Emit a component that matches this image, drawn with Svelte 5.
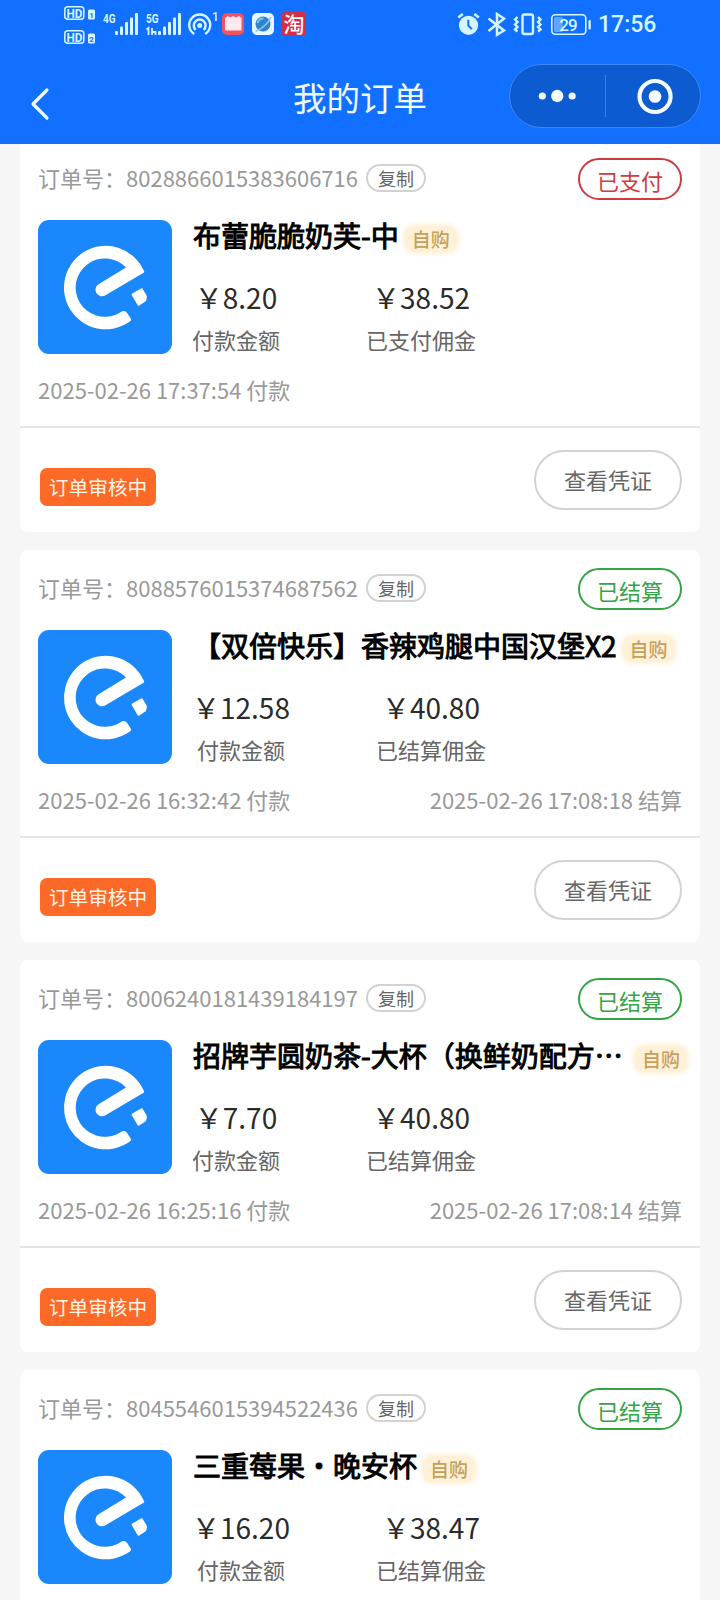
<script lang="ts">
  type Order = {
    id: string;
    name: string;
    truncated?: boolean;
    paid: string;
    commission: string;
    settled: boolean;
    paidAt?: string;
    settledAt?: string;
  };

  const orders: Order[] = [
    {
      id: '8028866015383606716',
      name: '布蕾脆脆奶芙-中',
      paid: '8.20',
      commission: '38.52',
      settled: false,
      paidAt: '2025-02-26 17:37:54'
    },
    {
      id: '8088576015374687562',
      name: '【双倍快乐】香辣鸡腿中国汉堡X2',
      paid: '12.58',
      commission: '40.80',
      settled: true,
      paidAt: '2025-02-26 16:32:42',
      settledAt: '2025-02-26 17:08:18'
    },
    {
      id: '8006240181439184197',
      name: '招牌芋圆奶茶-大杯（换鲜奶配方⋯',
      truncated: true,
      paid: '7.70',
      commission: '40.80',
      settled: true,
      paidAt: '2025-02-26 16:25:16',
      settledAt: '2025-02-26 17:08:14'
    },
    {
      id: '8045546015394522436',
      name: '三重莓果・晚安杯',
      paid: '16.20',
      commission: '38.47',
      settled: true
    }
  ];

  const bars = [0, 1, 2, 3, 4];
</script>

<div class="screen" lang="zh-CN">
  <header>
    <div class="status-bar">
      <svg class="hd" width="34" height="50" viewBox="63 0 34 50">
        {#each [6, 30] as y, i}
          <rect x="64.8" y={y + 0.8} width="19" height="12.4" rx="3" class="line" stroke-width="1.5" />
          <text x="66.4" y={y + 11.6} font-size="12.5" font-weight="700" textLength="16" lengthAdjust="spacingAndGlyphs">HD</text>
          <rect x="88" y={y + 3.5} width="7" height="10" rx="1.5" />
          <text x="89.3" y={y + 11.6} font-size="8" font-weight="700" class="cut">{i + 1}</text>
        {/each}
      </svg>
      <svg width="42" height="50" viewBox="100 0 42 50">
        <text x="103" y="23" font-size="12.5" font-weight="700" textLength="12.5" lengthAdjust="spacingAndGlyphs">4G</text>
        {#each bars as i}
          <rect x={115 + i * 5} y={31 - i * 4.5} width="3" height={4 + i * 4.5} rx="1" />
        {/each}
      </svg>
      <svg width="42" height="50" viewBox="142 0 42 50">
        <text x="146" y="23" font-size="12.5" font-weight="700" textLength="12.5" lengthAdjust="spacingAndGlyphs">5G</text>
        <path d="M146.500 29.500l2-1.500v7M152 28v7M152 32h3.500v3" class="line" stroke-width="1.800" />
        {#each bars as i}
          <rect x={158 + i * 5} y={31 - i * 4.5} width="3" height={4 + i * 4.5} rx="1" />
        {/each}
      </svg>
      <svg width="36" height="50" viewBox="185 0 36 50">
        <path d="M195.200 34a10.500 10.500 0 1 1 11 0M196.700 29.800a5.900 5.900 0 1 1 8 0" class="line" stroke-width="2.400" />
        <circle cx="200.700" cy="25.500" r="2.500" />
        <text x="213" y="20.500" font-size="12" font-weight="500">1</text>
      </svg>
      <svg width="28" height="50" viewBox="221 0 28 50">
        <rect x="223" y="13" width="22" height="22" rx="5" fill="#f4515f" />
        <path d="M226 18l3-2 2 1.500 3-1.500 3 1.500 3-1.500 2.500 2v12.500H226z" fill="#fdeaf0" />
      </svg>
      <svg width="30" height="50" viewBox="249 0 30 50">
        <rect x="253" y="13" width="22" height="22" rx="5" fill="#e6f8ff" />
        <circle cx="264" cy="24" r="7.500" fill="#2f83cf" />
        <path d="M258.500 23a6 6 0 0 1 6-4.500" stroke="#7cc5ee" stroke-width="2" fill="none" />
        <path d="M256.500 31c3.500 0 13-7.500 15.500-14" fill="none" stroke="#8ec9f0" stroke-width="1.500" />
      </svg>
      <span class="taobao">淘</span>

      <svg class="push" width="26" height="50" viewBox="456 0 26 50">
        <circle cx="468.500" cy="25.300" r="9.600" />
        <path d="M458.300 17.500l4.500-3.600M478.800 17.500l-4.500-3.600" class="line" stroke-width="2.600" />
        <path d="M468.300 19.800v5.800l3.600 3.500" stroke="#1170ff" stroke-width="2" fill="none" />
      </svg>
      <svg width="28" height="50" viewBox="482 0 28 50">
        <path d="M488.500 18.500l15.500 12-7 4.300V14l7 4.500-15.500 12.500" class="line" stroke-width="2.500" />
      </svg>
      <svg width="36" height="50" viewBox="510 0 36 50">
        <rect x="522.500" y="14.500" width="10.500" height="19.500" rx="2" class="line" stroke-width="2.400" />
        <path d="M517.500 17l-2.500 2.500 2.500 2.500-2.500 2.500 2.500 2.500-2.500 2.500 2.500 2M538 17l2.500 2.500-2.500 2.500 2.500 2.500-2.500 2.500 2.500 2.500-2.500 2" class="line" stroke-width="2.400" />
      </svg>
      <svg width="48" height="50" viewBox="546 0 48 50">
        <rect x="551.800" y="14.800" width="34" height="19.400" rx="3.500" class="line" stroke-width="1.600" />
        <rect x="554" y="17" width="9" height="15" rx="1.500" opacity=".4" />
        <rect x="588.500" y="20" width="2.300" height="9.500" rx="1" />
        <text x="559.200" y="30.500" font-size="17" font-weight="500" textLength="18.500">29</text>
      </svg>
      <span class="time">17:56</span>
    </div>

    <div class="nav-bar">
      <svg class="back" width="24" height="36" viewBox="0 0 24 36">
        <path d="M19 4L5 18l14 14" fill="none" stroke="#f0fbff" stroke-width="3.200" stroke-linecap="round" stroke-linejoin="round" />
      </svg>
      <h1>我的订单</h1>
      <div class="capsule">
        <svg width="95" height="60" viewBox="0 0 95 60">
          <circle cx="32.500" cy="30" r="3.600" />
          <circle cx="47.500" cy="30" r="6.200" />
          <circle cx="62.500" cy="30" r="3.600" />
        </svg>
        <span class="capsule-line"></span>
        <svg width="95" height="60" viewBox="0 0 95 60">
          <circle cx="49.300" cy="30.500" r="15.600" fill="none" stroke="#f5fcff" stroke-width="4.200" />
          <circle cx="49.300" cy="30.500" r="6.400" />
        </svg>
      </div>
    </div>
  </header>

  <main>
    {#each orders as order (order.id)}
      {@const state = order.settled ? '已结算' : '已支付'}
      <article class="card">
        <div class="order-head">
          <span class="order-id">订单号：{order.id}</span>
          <button class="copy" type="button">复制</button>
          <span class="state" class:settled={order.settled}>{state}</span>
        </div>

        <div class="goods">
          <svg class="logo" width="134" height="134" viewBox="0 0 134 134">
            <rect width="134" height="134" rx="11" fill="#1a87fa" />
            <path
              d="M106 52.500L67.500 75.300A6.300 6.300 0 0 1 60.500 64.300L88 47.500A29.200 29.200 0 1 0 79 94.200L84.200 91.300Q87.500 90.200 89.300 93.200L93 99Q93.500 100.500 91.500 101.800A41.700 41.700 0 1 1 105.500 50Q106.700 51.800 106 52.500Z"
              fill="#fff"
            />
            <path d="M94.300 74.500L103.800 69L108 76Q108.500 78.500 107.300 80.500L100.500 85Z" fill="#fff" stroke="#fff" stroke-width="1.500" stroke-linejoin="round" />
          </svg>
          <div class="info">
            <div class="title-row">
              <h2 class:truncated={order.truncated}>{order.name}</h2>
              <span class="self-buy">自购</span>
            </div>
            <div class="amounts">
              <div class="amount">
                <strong>￥{order.paid}</strong>
                <span>付款金额</span>
              </div>
              <div class="amount">
                <strong>￥{order.commission}</strong>
                <span>{state}佣金</span>
              </div>
            </div>
          </div>
        </div>

        {#if order.paidAt}
          <div class="times">
            <span>{order.paidAt} 付款</span>
            {#if order.settledAt}
              <span>{order.settledAt} 结算</span>
            {/if}
          </div>

          <footer>
            <span class="review">订单审核中</span>
            <button class="voucher" type="button">查看凭证</button>
          </footer>
        {/if}
      </article>
    {/each}
  </main>
</div>

<style>
  :global(body) {
    margin: 0;
    background: #f6f6f6;
  }

  .screen {
    width: 720px;
    height: 1600px;
    overflow: hidden;
    background: #f6f6f6;
    font-family: 'Noto Sans CJK SC', sans-serif;
  }

  .screen * {
    box-sizing: border-box;
  }

  header {
    position: relative;
    z-index: 1;
    height: 144px;
    background: #1170ff;
    color: #f0fbff;
  }

  .status-bar {
    display: flex;
    align-items: flex-start;
    height: 50px;
    padding: 0 64px 0 63px;
    font-family: Roboto, sans-serif;
  }

  .status-bar svg {
    flex: none;
    fill: #d5f6ff;
  }

  .status-bar .hd {
    margin-right: 3px;
  }

  .status-bar .push {
    margin-left: auto;
  }

  .line {
    fill: none;
    stroke: #d5f6ff;
  }

  .status-bar .cut {
    fill: #1170ff;
  }

  .taobao {
    width: 24px;
    height: 24px;
    margin: 12px 0 0 4px;
    border-radius: 3px;
    background: #d52d43;
    color: #fff;
    font: 500 21px/22px 'Noto Sans CJK SC', sans-serif;
    text-align: center;
  }

  .time {
    width: 62px;
    padding-left: 4px;
    color: #d5f6ff;
    font-size: 23px;
    font-weight: 500;
    line-height: 50px;
    white-space: nowrap;
  }

  .nav-bar {
    display: grid;
    grid-template-columns: 265px auto 1fr;
    align-items: start;
    padding: 14px 19px 0 28px;
  }

  .back {
    margin-top: 22px;
  }

  h1 {
    margin: 8px 0 0;
    font-size: 33.500px;
    font-weight: 400;
    line-height: 50px;
  }

  .capsule {
    display: flex;
    align-items: center;
    justify-self: end;
    width: 192px;
    height: 64px;
    border: 1px solid #3d88ef;
    border-radius: 32px;
    background: #0c5bd0;
    fill: #f5fcff;
  }

  .capsule-line {
    flex: none;
    width: 1px;
    height: 42px;
    background: #3c7fdf;
  }

  main {
    display: flex;
    flex-direction: column;
    gap: 18px;
    margin-top: -4px;
    padding: 0 20px;
  }

  .card {
    flex: none;
    height: 392px;
    border-radius: 8px;
    background: #fff;
  }

  .order-head {
    display: flex;
    align-items: flex-start;
    height: 80px;
    padding: 18px 18px 0;
  }

  .order-id {
    color: #999;
    font-size: 22px;
    line-height: 39px;
  }

  button {
    border: 2px solid #d2d2d2;
    background: none;
    color: #666;
    font-family: inherit;
    padding: 0;
  }

  .copy {
    width: 60px;
    height: 28px;
    margin: 6px 0 0 8px;
    border-radius: 14px;
    font-size: 18px;
    line-height: 23px;
  }

  .state {
    width: 104px;
    height: 42px;
    margin-left: auto;
    border: 2px solid #cf3c40;
    border-radius: 21px;
    color: #cf3c40;
    font-size: 22px;
    line-height: 40px;
    text-align: center;
  }

  .state.settled {
    border-color: #33a545;
    color: #33a545;
  }

  .goods {
    display: flex;
    gap: 20px;
    height: 134px;
    padding-left: 18px;
  }

  .logo {
    flex: none;
  }

  .title-row {
    display: flex;
    align-items: flex-start;
    height: 58px;
    padding-left: 1px;
    white-space: nowrap;
  }

  h2 {
    margin: 0;
    color: #000;
    font-size: 28px;
    font-weight: 400;
    line-height: 31px;
    -webkit-text-stroke: 1px #000;
  }

  .truncated {
    width: 436px;
  }

  .self-buy {
    width: 52px;
    height: 26px;
    margin: 6px 0 0 6px;
    border-radius: 10px;
    background: #fef1d8;
    box-shadow: 0 0 5px 2px #fef1d8;
    color: #c5a05c;
    font-size: 19px;
    font-weight: 500;
    line-height: 25px;
    text-align: center;
  }

  .amounts {
    display: flex;
    gap: 86px;
  }

  .amount {
    display: flex;
    flex-direction: column;
    align-items: center;
  }

  .amount strong {
    color: #2b2b2b;
    font-size: 28px;
    font-weight: 400;
    line-height: 39px;
  }

  .amount span {
    color: #666;
    font-size: 22px;
    line-height: 45px;
  }

  .times {
    display: flex;
    justify-content: space-between;
    height: 74px;
    padding: 17px 18px 0;
    border-bottom: 2px solid #e4e4e4;
    color: #999;
    font-size: 22px;
    line-height: 37px;
  }

  footer {
    display: flex;
    align-items: flex-start;
    justify-content: space-between;
    padding: 22px 18px 0 20px;
  }

  .review {
    width: 116px;
    height: 38px;
    margin-top: 18px;
    border-radius: 7px;
    background: #fd6a28;
    color: #fff5e8;
    font-size: 19.700px;
    line-height: 37px;
    text-align: center;
  }

  .voucher {
    width: 148px;
    height: 60px;
    border-radius: 30px;
    font-size: 22px;
    line-height: 54px;
    padding-bottom: 2px;
  }
</style>
